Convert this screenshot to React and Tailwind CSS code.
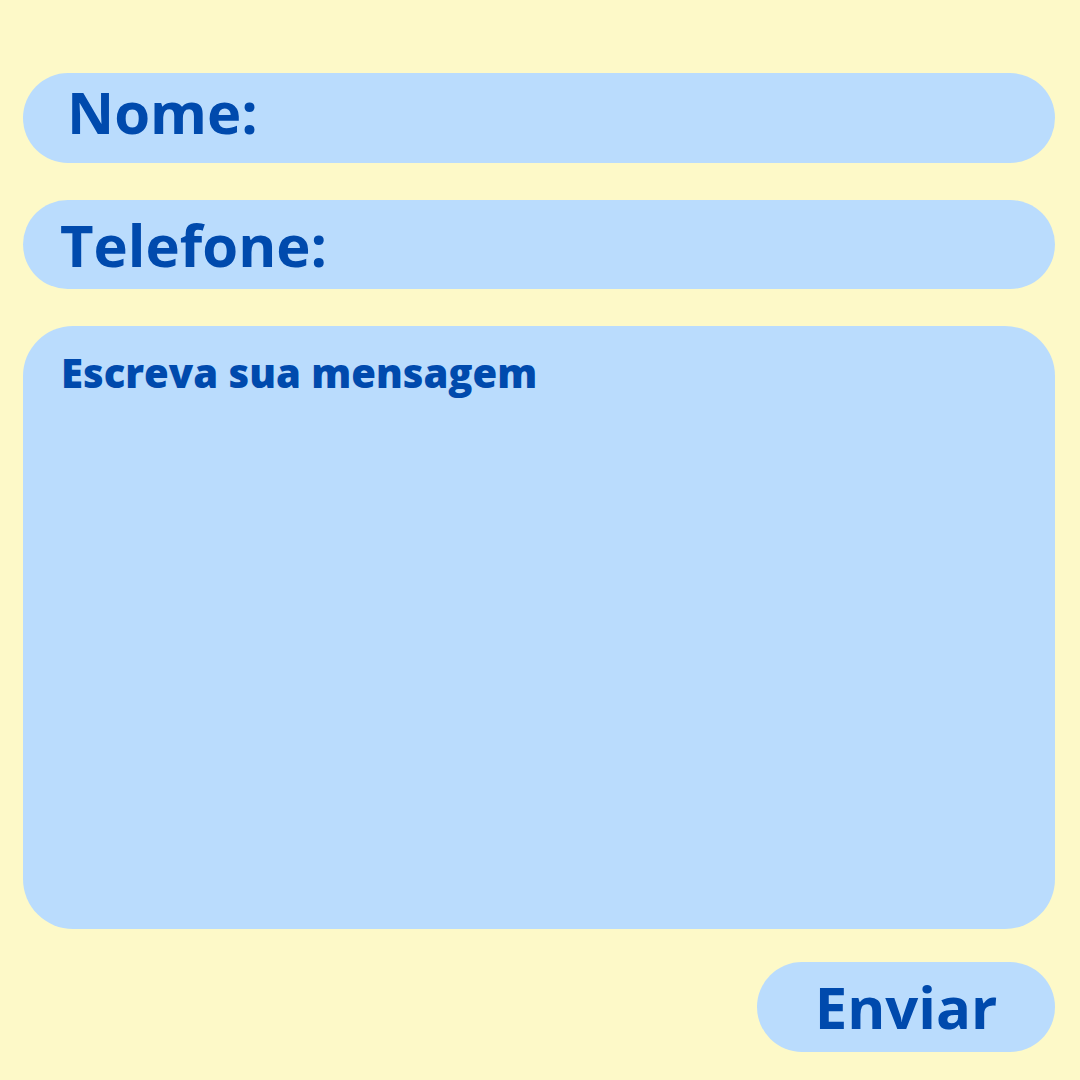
export default function App() {
  return (
    <div
      className="w-[1080px] h-[1080px] bg-[#fdf9c8] pt-[73px] pl-[23px] pr-[25px] flex flex-col text-[#004aad] font-bold"
      style={{ fontFamily: '"Open Sans", "Noto Sans", sans-serif' }}
    >
      <div className="h-[90px] rounded-full bg-[#badcfd] flex items-start pt-[10px] pl-[44px]">
        <span className="text-[58px] leading-none">Nome:</span>
      </div>
      <div className="mt-[37px] h-[89px] rounded-full bg-[#badcfd] flex items-center pl-[37px]">
        <span className="text-[58px] leading-none">Telefone:</span>
      </div>
      <div className="mt-[37px] h-[603px] rounded-[50px] bg-[#badcfd] pl-[38px] pt-[27px]">
        <span className="text-[40px] leading-none font-extrabold">Escreva sua mensagem</span>
      </div>
      <div className="mt-[33px] flex justify-end">
        <button className="w-[298px] h-[90px] rounded-full bg-[#badcfd] flex items-center justify-center">
          <span className="text-[58px] leading-none">Enviar</span>
        </button>
      </div>
    </div>
  );
}
